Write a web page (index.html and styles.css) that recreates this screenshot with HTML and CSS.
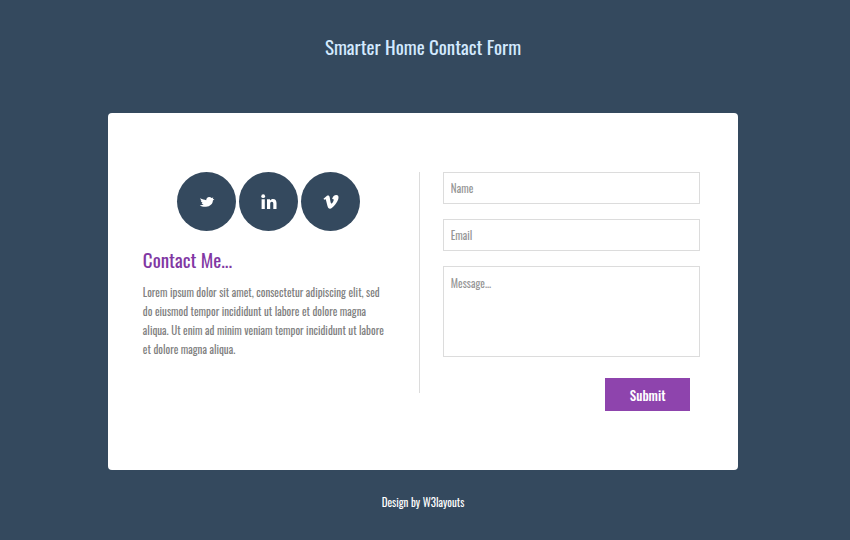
FILE: index.html
```html
<!DOCTYPE html>
<html lang="en">
<head>
<meta charset="utf-8">
<meta name="viewport" content="width=device-width, initial-scale=1">
<title>Smarter Home Contact Form</title>
<link rel="stylesheet" href="styles.css">
</head>
<body>
<h1 class="title">Smarter Home Contact Form</h1>
<main class="card">
  <section class="about">
    <ul class="social">
      <li><a href="#" aria-label="Twitter"><svg width="16" height="16" viewBox="0 0 16 16"><path d="M1.2 4.2C3.4 5.2 5.4 5.6 7.2 6.2C7.2 4.2 8.4 2.9 10.2 2.9C11.2 2.9 12 3.3 12.5 4L14.3 3.6L13.8 4.9L15.4 5.2L13.9 6.5C13.8 9.9 11 12.6 7 12.8C4.4 12.9 2.2 12.4 0.8 11.2C2.4 11.3 3.8 11 4.8 10.3C3.6 10.2 2.9 9.7 2.6 8.9L3.7 8.7C2.5 8.2 1.9 7.5 1.8 6.6L2.8 6.7C1.9 6 1.3 5.2 1.2 4.2Z"/></svg></a></li>
      <li><a href="#" aria-label="LinkedIn"><svg width="16" height="16" viewBox="0 0 16 16"><circle cx="2.2" cy="2.2" r="1.9"/><path d="M0.6 5.2H3.8V15H0.6ZM6 5.2H9V6.6C9.7 5.5 10.7 4.9 12 4.9C14.4 4.9 15.5 6.5 15.5 9V15H12.3V9.7C12.3 8.4 11.8 7.7 10.8 7.7C9.8 7.7 9.2 8.5 9.2 9.7V15H6Z"/></svg></a></li>
      <li><a href="#" aria-label="Vimeo"><svg width="16" height="16" viewBox="0 0 16 16"><path d="M0.5 4.7L4 1.8C5.3 0.9 6.4 1.5 6.7 3.2L7.4 7.3C7.7 9 8.1 9.7 8.5 9.6C9.1 9.5 10.7 7.1 10.7 5.9C10.7 5.1 10.1 4.9 9 5.3C9.7 2.4 11.3 1 13.3 1C15 1 15.7 2.2 15.5 4.1C15.1 7.8 9.6 14.8 7 14.8C5.6 14.8 4.9 13.7 4.4 11.8L3.2 6.9C3 5.9 2.7 5.3 2.3 5.3C2 5.3 1.7 5.5 1.2 5.8Z"/></svg></a></li>
    </ul>
    <h2>Contact Me...</h2>
    <p>Lorem ipsum dolor sit amet, consectetur adipiscing elit, sed do eiusmod tempor incididunt ut labore et dolore magna aliqua. Ut enim ad minim veniam tempor incididunt ut labore et dolore magna aliqua.</p>
  </section>
  <form class="form">
    <input type="text" aria-label="Name" placeholder="Name">
    <input type="email" aria-label="Email" placeholder="Email">
    <textarea aria-label="Message" placeholder="Message..."></textarea>
    <button type="submit">Submit</button>
  </form>
</main>
<footer>Design by <a href="#">W3layouts</a></footer>
</body>
</html>
```
FILE: styles.css
```css
* {
  box-sizing: border-box;
}

body {
  margin: 0;
  padding: 31px 4px 24px 0;
  min-height: 100vh;
  background: #34495e;
  font-family: Oswald, "Liberation Sans Narrow", "Roboto Condensed", "Liberation Sans", sans-serif;
}

.title {
  margin: 0;
  color: #d3eaff;
  font-size: 19px;
  font-weight: 400;
  line-height: 30px;
  text-align: center;
}

.card {
  display: grid;
  grid-template-columns: 277px 1fr;
  width: 74.5%;
  margin: 52px auto 0;
  padding: 59px 38px 59px 35px;
  border-radius: 4px;
  background: #fff;
}

.about {
  align-self: start;
  min-height: 221px;
  padding-right: 24px;
  border-right: 1px solid #dcdcdc;
}

.social {
  display: flex;
  justify-content: center;
  gap: 3px;
  margin: 0;
  padding: 0;
  list-style: none;
}

.social a {
  display: flex;
  align-items: center;
  justify-content: center;
  width: 59px;
  height: 59px;
  border-radius: 50%;
  background: #34495e;
}

.social svg {
  fill: #fff;
}

h2 {
  margin: 13px 0 9px;
  color: #8137a3;
  font-size: 19px;
  font-weight: 400;
  line-height: 30px;
}

p {
  margin: 0;
  padding-right: 6px;
  color: #808080;
  font-size: 11px;
  line-height: 19px;
}

.form {
  display: flex;
  flex-direction: column;
  padding-left: 23px;
}

.form input,
.form textarea {
  display: block;
  width: 100%;
  height: 32px;
  margin: 0 0 15px;
  padding: 7px;
  border: 1px solid #dcdcdc;
  border-radius: 0;
  background: #fff;
  color: #555;
  font-family: inherit;
  font-size: 11px;
  line-height: 18px;
}

.form textarea {
  height: 91px;
  margin-bottom: 21px;
  resize: none;
}

.form ::placeholder {
  color: #969696;
  opacity: 1;
}

button {
  align-self: flex-end;
  width: 85px;
  height: 33px;
  margin-right: 10px;
  padding: 0;
  border: 0;
  background: #8e44ad;
  color: #fff;
  font-family: inherit;
  font-size: 13px;
  font-weight: 500;
}

footer {
  margin-top: 22px;
  color: #fff;
  font-size: 11px;
  font-weight: 400;
  line-height: 20px;
  text-align: center;
}

footer a {
  color: inherit;
  text-decoration: none;
}
```
